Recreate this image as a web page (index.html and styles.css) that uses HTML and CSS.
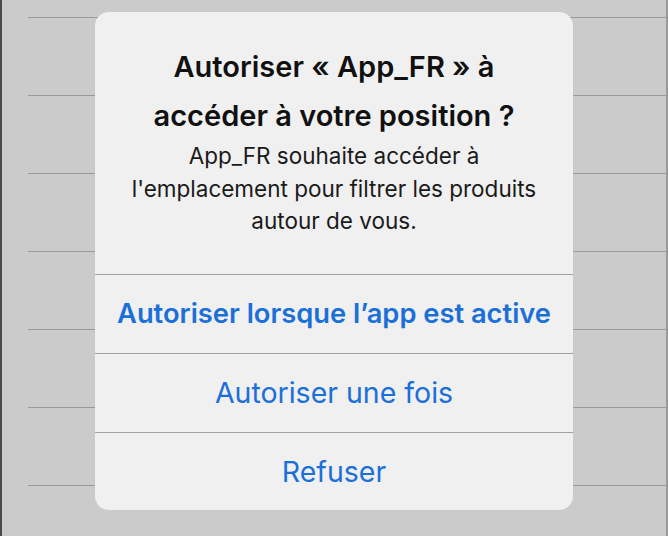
FILE: index.html
```html
<!DOCTYPE html>
<html lang="fr">
<head>
<meta charset="utf-8">
<link rel="stylesheet" href="styles.css">
</head>
<body>
<div class="screen">
  <div class="list">
    <div class="row"></div>
    <div class="row"></div>
    <div class="row"></div>
    <div class="row"></div>
    <div class="row"></div>
    <div class="row"></div>
    <div class="row"></div>
  </div>
  <div class="alert">
    <div class="alert-body">
      <h1 class="alert-title">Autoriser « App_FR » à<br>accéder à votre position ?</h1>
      <p class="alert-msg">App_FR souhaite accéder à<br>l'emplacement pour filtrer les produits<br>autour de vous.</p>
    </div>
    <div class="alert-actions">
      <button class="action action-strong">Autoriser lorsque l’app est active</button>
      <button class="action">Autoriser une fois</button>
      <button class="action action-last">Refuser</button>
    </div>
  </div>
</div>
</body>
</html>
```
FILE: styles.css
```css
html, body {
  margin: 0;
  padding: 0;
}
body {
  background: #cbcbcb;
  font-family: Inter, "Noto Sans", "Liberation Sans", sans-serif;
}
.screen {
  position: relative;
  width: 668px;
  height: 536px;
  overflow: hidden;
  background: #cbcbcb;
  border-left: 2px solid #4a4a4a;
  border-right: 2px solid #9a9a9a;
  box-sizing: border-box;
}
.list {
  padding-top: 17px;
  padding-left: 26px;
}
.row {
  height: 77px;
  border-top: 1px solid #9a9a9a;
}
.alert {
  position: absolute;
  left: 93px;
  top: 12px;
  width: 478px;
  height: 498px;
  background: #f0f0f0;
  border-radius: 14px;
  overflow: hidden;
  display: flex;
  flex-direction: column;
  text-align: center;
}
.alert-body {
  padding: 30px 10px 36px;
}
.alert-title {
  margin: 0;
  font-size: 29px;
  font-weight: 600;
  line-height: 49px;
  color: #111;
}
.alert-msg {
  margin: 0;
  font-size: 22.5px;
  font-weight: 400;
  line-height: 32.5px;
  color: #1a1a1a;
}
.alert-actions {
  display: flex;
  flex-direction: column;
}
.action {
  height: 79px;
  border: 0;
  border-top: 1px solid #a0a0a0;
  background: transparent;
  font-family: inherit;
  font-size: 28.5px;
  font-weight: 400;
  color: #1b6fd8;
  padding: 0;
}
.action-strong {
  font-size: 27.3px;
  font-weight: 600;
}
.action-last {
  height: 78px;
}
```
